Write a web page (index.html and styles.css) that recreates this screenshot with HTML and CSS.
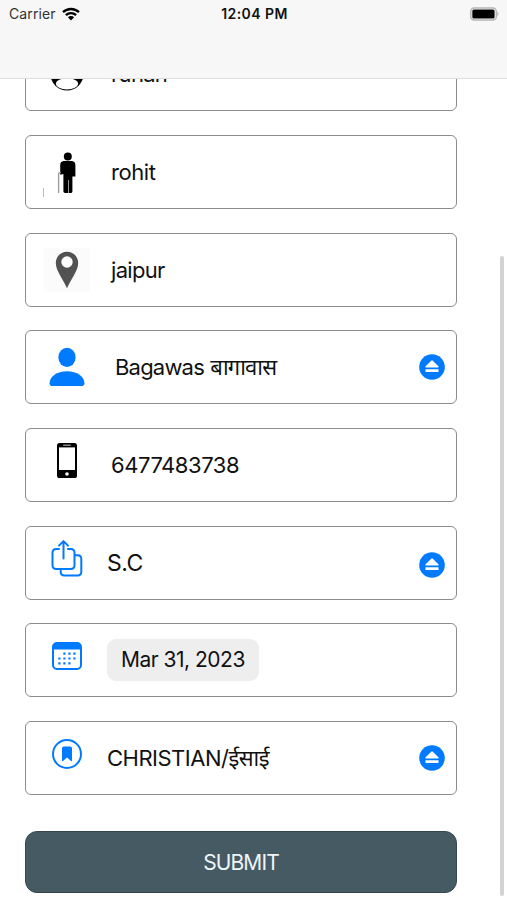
FILE: index.html
```html
<!DOCTYPE html>
<html lang="en">

<head>
    <meta charset="UTF-8">
    <meta name="viewport" content="width=device-width, initial-scale=1.0">
    <title>Registration Form</title>
    <link rel="stylesheet" href="styles.css">
</head>

<body>
    <header class="header">
        <div class="status-bar">
            <div class="carrier">
                <span>Carrier</span>
                <svg class="wifi" viewBox="0 0 18 14">
                    <path d="M1 5.2a11.6 11.6 0 0 1 16 0M3.9 8.1a7.4 7.4 0 0 1 10.2 0" fill="none" stroke="#000" stroke-width="2.3"/>
                    <path d="M5.9 10.2a4.4 4.4 0 0 1 6.2 0L9 13.4z"/>
                </svg>
            </div>
            <div class="time">12:04 PM</div>
            <div class="battery-wrap">
                <svg class="battery" viewBox="0 0 31 14">
                    <rect x="0.8" y="0.8" width="26.4" height="12.4" rx="3.6" fill="#fff" stroke="#b5b5b5" stroke-width="1.6"/>
                    <rect x="2.4" y="2.4" width="23" height="9.2" rx="1.6"/>
                    <path d="M28.3 4.8q2.4 2.2 0 4.4z" fill="#b0b0b0"/>
                </svg>
            </div>
        </div>
    </header>

    <main class="content">
        <form class="form">
            <div class="field">
                <div class="icon">
                    <svg width="34" height="34" viewBox="0 0 34 34">
                        <circle cx="17" cy="17" r="16.5" fill="#000"/>
                        <ellipse cx="17" cy="26.8" rx="11.2" ry="5.6" fill="#fff"/>
                    </svg>
                </div>
                <span class="value name">ruhan</span>
            </div>

            <div class="field">
                <div class="icon elder">
                    <svg width="46" height="46" viewBox="0 0 46 46">
                        <circle cx="23.8" cy="9.6" r="4"/>
                        <path d="M19.6 14h8.400q3.400.4 3.400 4.400v11h-3V44.400q0 1.600-1.800 1.600h-2V33h-.6v13h-2q-2.600 0-2.600-1.600V27l-3.200.8V18.200q0-3.800 3.400-4.200z"/>
                        <path d="M14.6 46V26.800q0-1.400 2.200-1.400" fill="none" stroke="#9a9a9a" stroke-width="1.3"/>
                        <path d="M-.5 41v9" stroke="#bbb" stroke-width="1"/>
                    </svg>
                </div>
                <span class="value">rohit</span>
            </div>

            <div class="field">
                <div class="icon place">
                    <svg width="24" height="38" viewBox="0 0 24 38">
                        <path d="M12 .8C5.4.8.8 5.8.8 12c0 7.500 6.500 15 11.200 25.200C16.700 27 23.200 19.500 23.200 12 23.200 5.800 18.600.8 12 .8z" fill="#525252"/>
                        <circle cx="12" cy="11" r="5.7" fill="#fff"/>
                    </svg>
                </div>
                <span class="value city">jaipur</span>
            </div>

            <div class="field">
                <div class="icon">
                    <svg width="36" height="40" viewBox="0 0 36 40">
                        <ellipse cx="18" cy="10.4" rx="8.6" ry="9.6" fill="#007aff"/>
                        <path d="M3.400 39Q.6 39 .6 36.200C.6 29.500 8 24.200 18 24.200s17.400 5.300 17.400 12Q35.400 39 32.600 39z" fill="#007aff"/>
                    </svg>
                </div>
                <span class="value village">Bagawas बागावास</span>
                <svg class="eject" viewBox="0 0 26 26">
                    <circle cx="13" cy="13" r="12.8" fill="#007aff"/>
                    <path d="M12.200 6.700q.8-.8 1.600 0l5.600 5.600q.9 1.100-.4 1.100H7q-1.300 0-.4-1.100zM6.500 15.200h13v2.900h-13z" fill="#fff"/>
                </svg>
            </div>

            <div class="field">
                <div class="icon raised">
                    <svg width="20" height="35" viewBox="0 0 20 35">
                        <rect width="20" height="35" rx="2.6"/>
                        <rect x="2" y="4.4" width="16" height="22.6" fill="#fff"/>
                        <rect x="6" y="1.5" width="8" height="1.5" rx=".7" fill="#888"/>
                        <circle cx="10" cy="31" r="1.8" fill="#fff"/>
                    </svg>
                </div>
                <span class="value phone">6477483738</span>
            </div>

            <div class="field">
                <div class="icon raised">
                    <svg width="32" height="38" viewBox="0 0 32 38" fill="none" stroke="#007aff" stroke-width="2" stroke-linecap="round" stroke-linejoin="round">
                        <path d="M8 10H5.200Q1.500 10 1.500 13.700v12.600Q1.500 30 5.200 30h14.600q3.700 0 3.700-3.700V13.700Q23.500 10 19.800 10H17"/>
                        <path d="M12.500 19.500V2.500M8 6.600l4.500-4.500L17 6.600"/>
                        <path d="M24 16.200h2.600q3.700 0 3.700 3.700v12.800q0 3.700-3.700 3.700H13.400q-3.700 0-3.700-3.700v-2.200"/>
                    </svg>
                </div>
                <span class="value caste">S.C</span>
                <svg class="eject low" viewBox="0 0 26 26">
                    <circle cx="13" cy="13" r="12.8" fill="#007aff"/>
                    <path d="M12.200 6.700q.8-.8 1.600 0l5.600 5.600q.9 1.100-.4 1.100H7q-1.300 0-.4-1.100zM6.500 15.200h13v2.900h-13z" fill="#fff"/>
                </svg>
            </div>

            <div class="field">
                <div class="icon raised">
                    <svg width="30" height="28" viewBox="0 0 30 28">
                        <rect x="1" y="1" width="28" height="26" rx="4" fill="none" stroke="#007aff" stroke-width="2"/>
                        <path d="M1 7.500V5q0-4 4-4h20q4 0 4 4v2.500z" fill="#007aff"/>
                        <path d="M11.300 11.700h13M6.300 16.500h18M6.300 21.300h13" stroke="#007aff" stroke-width="2.200" stroke-dasharray="2.200 2.800"/>
                    </svg>
                </div>
                <span class="value date">Mar 31, 2023</span>
            </div>

            <div class="field">
                <div class="icon raised">
                    <svg width="30" height="30" viewBox="0 0 30 30">
                        <circle cx="15" cy="15" r="14" fill="none" stroke="#007aff" stroke-width="2"/>
                        <path d="M10 9.200Q10 7.400 11.800 7.400h6.400q1.800 0 1.800 1.800v12.400q0 1.200-1 .3L15 18.400l-4 3.500q-1 .9-1-.3z" fill="#007aff"/>
                    </svg>
                </div>
                <span class="value religion">CHRISTIAN/ईसाई</span>
                <svg class="eject" viewBox="0 0 26 26">
                    <circle cx="13" cy="13" r="12.8" fill="#007aff"/>
                    <path d="M12.200 6.700q.8-.8 1.600 0l5.600 5.600q.9 1.100-.4 1.100H7q-1.300 0-.4-1.100zM6.500 15.200h13v2.900h-13z" fill="#fff"/>
                </svg>
            </div>

            <button type="button" class="submit">SUBMIT</button>
        </form>
        <div class="scrollbar"></div>
    </main>
</body>

</html>
```

FILE: styles.css
```css
/* Reset and base styling */
* {
    margin: 0;
    padding: 0;
    box-sizing: border-box;
}

body {
    font-family: Inter, 'Noto Sans', 'Liberation Sans', sans-serif;
    background: #ffffff;
    color: #111111;
    height: 900px;
    display: flex;
    flex-direction: column;
    overflow: hidden;
}

svg {
    display: block;
    flex-shrink: 0;
}

/* Header */
.header {
    height: 79px;
    flex-shrink: 0;
    background: #f7f7f7;
    border-bottom: 1px solid #dedede;
}

.status-bar {
    display: grid;
    grid-template-columns: 1fr auto 1fr;
    align-items: center;
    height: 27px;
    padding: 0 7px 0 9px;
}

.carrier {
    display: flex;
    align-items: center;
    gap: 6px;
    font-size: 14px;
    letter-spacing: 0.1px;
    color: #333333;
}

.wifi {
    width: 18px;
    height: 14px;
}

.time {
    font-size: 14px;
    font-weight: 600;
    letter-spacing: 0.45px;
}

.battery-wrap {
    display: flex;
    justify-content: flex-end;
}

.battery {
    width: 30px;
    height: 14px;
}

/* Form */
.content {
    flex: 1;
    position: relative;
    overflow: hidden;
}

.form {
    width: 432px;
    margin: -41.6px 0 0 25px;
    display: flex;
    flex-direction: column;
    gap: 23.68px;
}

.field {
    height: 74px;
    flex-shrink: 0;
    display: flex;
    align-items: center;
    border: 1px solid #8c8c8c;
    border-radius: 6px;
    padding-right: 11px;
}

.icon {
    width: 46px;
    height: 46px;
    margin-left: 18px;
    flex-shrink: 0;
    display: flex;
    align-items: center;
    justify-content: center;
}

.icon.elder svg {
    overflow: visible;
}

.icon.elder {
    padding-bottom: 4px;
}

.icon.place {
    height: 44px;
    background: #fbfbfb;
}

.icon.raised {
    padding-bottom: 9px;
}

.value {
    margin-left: 21px;
    font-size: 22px;
    line-height: 30px;
    letter-spacing: -0.45px;
    white-space: nowrap;
}

.value.name,
.value.city {
    letter-spacing: -0.7px;
}

.value.village {
    margin-left: 25px;
    letter-spacing: -0.8px;
    word-spacing: 1px;
}

.value.caste,
.value.religion {
    margin-left: 17px;
}

.value.caste {
    font-size: 23px;
}

.value.religion {
    letter-spacing: -0.5px;
}

.value.date {
    margin-left: 17px;
    padding: 6px 14px;
    font-size: 21px;
    letter-spacing: -0.5px;
    background: #eeeeee;
    border-radius: 9px;
}

.eject {
    width: 26px;
    height: 26px;
    margin-left: auto;
}

.eject.low {
    margin-top: 4px;
}

.submit {
    height: 62px;
    margin-top: 12.4px;
    padding-top: 1px;
    flex-shrink: 0;
    font-family: inherit;
    font-size: 21px;
    letter-spacing: -0.9px;
    color: #eef5fa;
    background: #465a63;
    border: 1px solid #37474f;
    border-radius: 12px;
}

/* Scroll indicator over the content */
.scrollbar {
    position: absolute;
    top: 177px;
    right: 3px;
    width: 4px;
    height: 640px;
    background: #d3d3d3;
    border-radius: 2px;
}
```
